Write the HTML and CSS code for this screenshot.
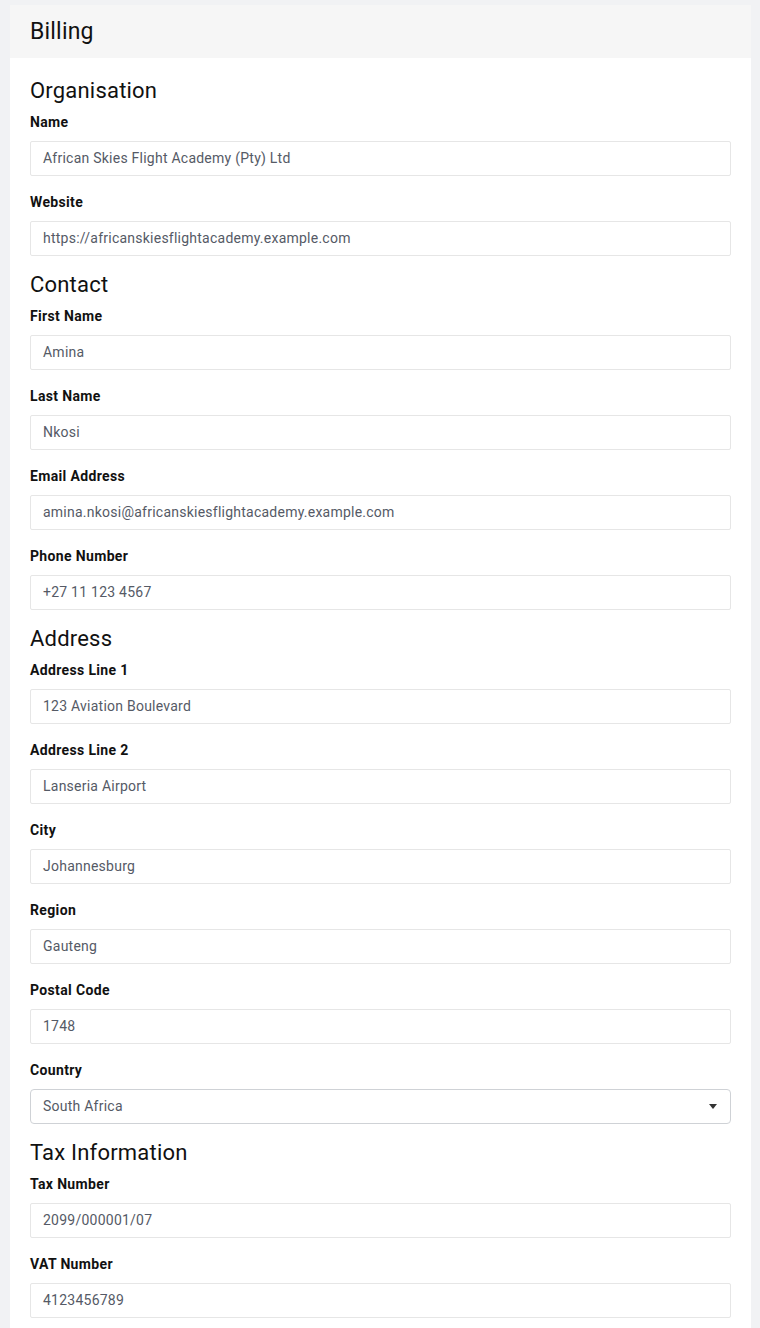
FILE: index.html
```html
<!DOCTYPE html>
<html lang="en">
<head>
<meta charset="utf-8">
<title>Billing</title>
<link rel="stylesheet" href="styles.css">
</head>
<body>
<div class="card">
  <div class="card-header"><h1 class="card-title">Billing</h1></div>
  <div class="card-body">
    <h2 class="section-title">Organisation</h2>
    <div class="field"><label class="field-label">Name</label><div class="input">African Skies Flight Academy (Pty) Ltd</div></div>
    <div class="field"><label class="field-label">Website</label><div class="input">https://africanskiesflightacademy.example.com</div></div>

    <h2 class="section-title">Contact</h2>
    <div class="field"><label class="field-label">First Name</label><div class="input">Amina</div></div>
    <div class="field"><label class="field-label">Last Name</label><div class="input">Nkosi</div></div>
    <div class="field"><label class="field-label">Email Address</label><div class="input">amina.nkosi@africanskiesflightacademy.example.com</div></div>
    <div class="field"><label class="field-label">Phone Number</label><div class="input">+27 11 123 4567</div></div>

    <h2 class="section-title">Address</h2>
    <div class="field"><label class="field-label">Address Line 1</label><div class="input">123 Aviation Boulevard</div></div>
    <div class="field"><label class="field-label">Address Line 2</label><div class="input">Lanseria Airport</div></div>
    <div class="field"><label class="field-label">City</label><div class="input">Johannesburg</div></div>
    <div class="field"><label class="field-label">Region</label><div class="input">Gauteng</div></div>
    <div class="field"><label class="field-label">Postal Code</label><div class="input">1748</div></div>
    <div class="field"><label class="field-label">Country</label><div class="input select"><span>South Africa</span><span class="caret"></span></div></div>

    <h2 class="section-title">Tax Information</h2>
    <div class="field"><label class="field-label">Tax Number</label><div class="input">2099/000001/07</div></div>
    <div class="field"><label class="field-label">VAT Number</label><div class="input">4123456789</div></div>
  </div>
</div>
</body>
</html>
```
FILE: styles.css
```css
* { box-sizing: border-box; }
html, body { margin: 0; padding: 0; }
body {
  background: #f1f2f4;
  font-family: "Roboto", "Liberation Sans", sans-serif;
  color: #111;
  padding: 5px 9px 0 10px;
  height: 1328px;
  overflow: hidden;
}
.card {
  background: #fff;
  min-height: 1340px;
}
.card-header {
  background: #f6f6f6;
  height: 53px;
  padding: 0 20px;
  display: flex;
  align-items: center;
}
.card-title {
  margin: 0;
  font-size: 23px;
  font-weight: 400;
  line-height: 28px;
  letter-spacing: 0.2px;
  padding-top: 1px;
}
.card-body {
  padding: 19px 20px 20px 20px;
}
.section-title {
  margin: 0 0 8px 0;
  padding-top: 1px;
  height: 26px;
  font-size: 22px;
  font-weight: 400;
  line-height: 26px;
  letter-spacing: 0.2px;
}
.field {
  margin-bottom: 15px;
  display: flex;
  flex-direction: column;
}
.field-label {
  font-size: 14px;
  font-weight: 700;
  line-height: 21px;
  height: 21px;
  padding-top: 1px;
  margin-bottom: 9px;
  letter-spacing: 0.35px;
  color: #111;
}
.input {
  height: 35px;
  border: 1px solid #e6e6e6;
  border-radius: 2px;
  padding: 0 12px 1px 12px;
  display: flex;
  align-items: center;
  font-size: 14px;
  letter-spacing: 0.24px;
  color: #555a66;
}
.select {
  border-color: #cfd2d6;
  border-radius: 4px;
  justify-content: space-between;
}
.caret {
  width: 0;
  height: 0;
  border-left: 4px solid transparent;
  border-right: 4px solid transparent;
  border-top: 5px solid #333;
  margin-right: 1px;
}
```
